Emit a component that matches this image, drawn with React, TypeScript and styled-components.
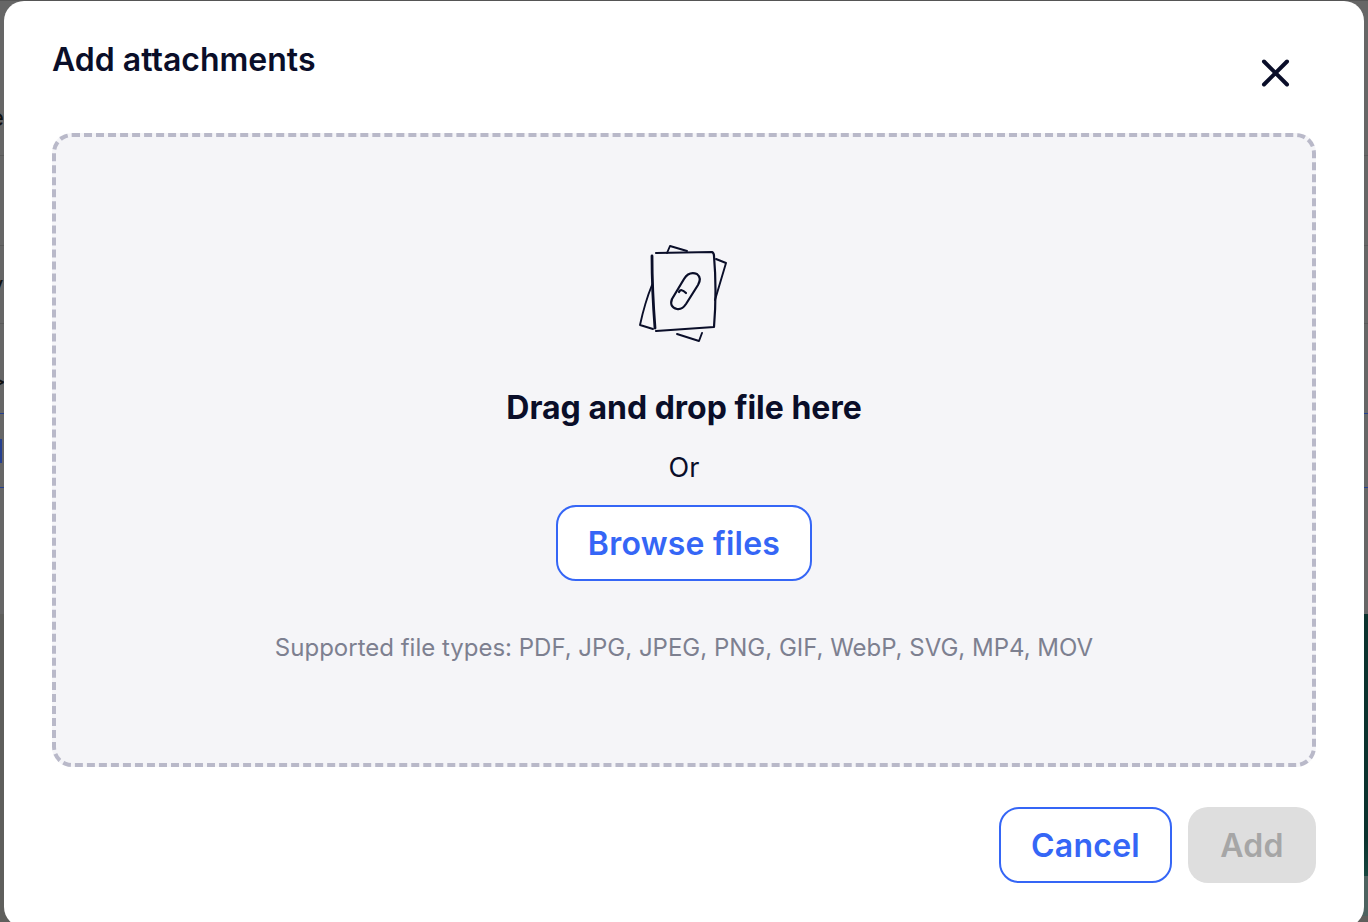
import React from "react";
import styled, { createGlobalStyle } from "styled-components";

const Global = createGlobalStyle`
  html, body { margin: 0; padding: 0; height: 100%; overflow: hidden; background: #666; }
  * { box-sizing: border-box; }
`;

const Page = styled.div`
  position: relative;
  width: 1368px;
  height: 922px;
  overflow: hidden;
  background: #666666;
  font-family: Inter, "Liberation Sans", sans-serif;
`;

const Behind = styled.div`
  position: absolute;
  inset: 0;
  display: flex;
  flex-direction: column;
  border-top: 1px solid #555;
`;

const BehindRow = styled.div<{ $h: number; $line?: string; $top?: number }>`
  flex: 0 0 ${(p) => p.$h}px;
  display: flex;
  align-items: center;
  padding-top: ${(p) => p.$top ?? 0}px;
  border-bottom: 1px solid ${(p) => p.$line ?? "transparent"};
  font-size: 24px;
  line-height: 1;
  color: #111;
  overflow: hidden;
`;

const Fragment = styled.span`
  margin-left: -10px;
`;

const BlueMark = styled.span`
  width: 2px;
  height: 24px;
  background: #26408f;
`;

const LowerArea = styled.div`
  flex: 1;
  display: flex;
  justify-content: flex-end;
  background: #5f5f5c;
`;

const Banner = styled.div`
  width: 50%;
  height: 302px;
  display: flex;
  flex-direction: column;
`;

const Teal = styled.div`
  flex: 0 0 262px;
  background: linear-gradient(#0b322e 0 85%, #17463f 100%);
`;

const TealEnd = styled.div`
  flex: 0 0 40px;
  background: #4d625f;
`;

const Modal = styled.section`
  position: absolute;
  left: 4px;
  top: 1px;
  width: 1360px;
  height: 926px;
  background: #ffffff;
  border-radius: 20px;
  padding: 0 48px;
  display: flex;
  flex-direction: column;
`;

const Header = styled.header`
  height: 132px;
  display: flex;
  justify-content: space-between;
  align-items: flex-start;
`;

const Title = styled.h2`
  margin: 38.5px 0 0;
  font-size: 32px;
  line-height: 40px;
  font-weight: 600;
  color: #0a0e29;
`;

const CloseButton = styled.button`
  margin: 52px 20px 0 0;
  width: 40px;
  height: 40px;
  padding: 0;
  border: 0;
  background: none;
  display: flex;
  align-items: center;
  justify-content: center;
`;

const DropZone = styled.div`
  height: 634px;
  border: 4px dashed #b9b9c9;
  border-radius: 20px;
  background: #f5f5f8;
  display: flex;
  flex-direction: column;
  align-items: center;
  padding-top: 93px;
`;

const Illustration = styled.svg`
  width: 130px;
  height: 130px;
  display: block;
`;

const DropTitle = styled.div`
  margin-top: 28px;
  font-size: 32px;
  line-height: 40px;
  font-weight: 700;
  color: #0a0e29;
`;

const OrText = styled.div`
  margin-top: 20px;
  font-size: 27px;
  line-height: 40px;
  color: #0a0e29;
`;

const Button = styled.button<{ $w: number; $disabled?: boolean }>`
  width: ${(p) => p.$w}px;
  height: 76px;
  border-radius: 20px;
  padding: 0;
  font-family: inherit;
  font-size: 32px;
  font-weight: 600;
  letter-spacing: 0.25px;
  border: ${(p) => (p.$disabled ? "0" : "2px solid #3566f6")};
  background: ${(p) => (p.$disabled ? "#dedede" : "#ffffff")};
  color: ${(p) => (p.$disabled ? "#a6a6a6" : "#3566f6")};
`;

const BrowseWrap = styled.div`
  margin-top: 17px;
`;

const Hint = styled.div`
  margin-top: 49px;
  font-size: 24px;
  line-height: 36px;
  color: #7d8090;
`;

const Footer = styled.footer`
  margin-top: 40px;
  display: flex;
  justify-content: flex-end;
  gap: 16px;
`;

export default function App() {
  return (
    <Page>
      <Global />
      <Behind>
        <BehindRow $h={155} $line="#5a5a5a" $top={80}><Fragment>e</Fragment></BehindRow>
        <BehindRow $h={90} $line="#5a5a5a" />
        <BehindRow $h={78} $line="#5a5a5a"><Fragment>y</Fragment></BehindRow>
        <BehindRow $h={90} $line="#26408f" $top={24}><Fragment>&gt;</Fragment></BehindRow>
        <BehindRow $h={74} $line="#26408f"><BlueMark /></BehindRow>
        <BehindRow $h={126} />
        <LowerArea>
          <Banner>
            <Teal />
            <TealEnd />
          </Banner>
        </LowerArea>
      </Behind>
      <Modal>
        <Header>
          <Title>Add attachments</Title>
          <CloseButton aria-label="Close">
            <svg width="40" height="40" viewBox="0 0 40 40" fill="none" stroke="#0a0e29" strokeWidth="4" strokeLinecap="round">
              <path d="M8 8.5 L31 31.5 M31 8.5 L8 31.5" />
            </svg>
          </CloseButton>
        </Header>
        <DropZone>
          <Illustration viewBox="0 0 130 130" fill="none" stroke="#0a0e29" strokeLinecap="round" strokeLinejoin="round">
            <path strokeWidth="1.9" d="M48 23 L51 16 L68 21 M97 29 L107 33 L96 70 M33 55 Q26 72 21 95 L34 99 M58 104 L80 111 L83 103" />
            <path strokeWidth="2.2" d="M37 23 L93 22 Q95 23 95 26 Q98 60 95 97 L37 101" />
            <path strokeWidth="2.8" d="M33 26 Q33 60 36 98" />
            <path strokeWidth="2.2" d="M58 79 Q50 77 53 69 L65 49 Q70 41 78 44 Q83 48 79 55 L67 74 Q63 80 58 79 M67 63 Q62 58 60 62" />
          </Illustration>
          <DropTitle>Drag and drop file here</DropTitle>
          <OrText>Or</OrText>
          <BrowseWrap>
            <Button $w={256}>Browse files</Button>
          </BrowseWrap>
          <Hint>Supported file types: PDF, JPG, JPEG, PNG, GIF, WebP, SVG, MP4, MOV</Hint>
        </DropZone>
        <Footer>
          <Button $w={173}>Cancel</Button>
          <Button $w={128} $disabled>Add</Button>
        </Footer>
      </Modal>
    </Page>
  );
}
